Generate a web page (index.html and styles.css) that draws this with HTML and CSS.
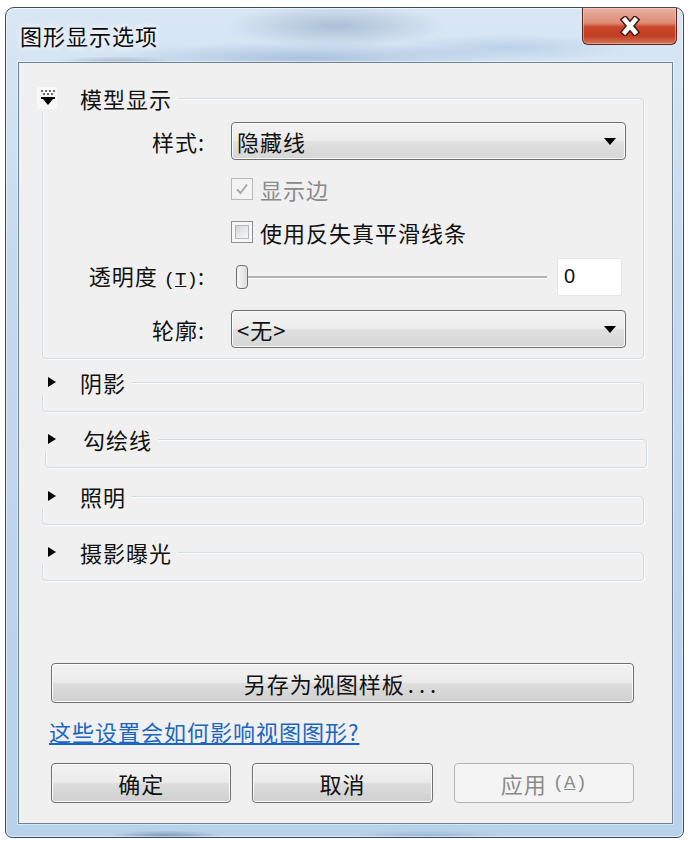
FILE: index.html
```html
<!DOCTYPE html>
<html lang="zh-CN">
<head>
<meta charset="utf-8">
<title>图形显示选项</title>
<link rel="stylesheet" href="styles.css">
</head>
<body>
<div class="window">
  <div class="titlebar">
    <div class="title">图形显示选项</div>
    <div class="close">
      <svg width="24" height="20" viewBox="0 0 24 20"><path d="M7 4 L17 16 M17 4 L7 16" stroke="#4a1810" stroke-width="7.5" stroke-linecap="square" fill="none"/><path d="M7 4 L17 16 M17 4 L7 16" stroke="#ffffff" stroke-width="4.5" stroke-linecap="square" fill="none"/></svg>
    </div>
  </div>
  <div class="client">
    <div class="group model">
      <div class="ghead">
        <span class="gicon">
          <svg width="14" height="16" viewBox="0 0 14 16">
            <g fill="#6a6a6a">
              <rect x="0" y="0" width="2" height="2"/><rect x="4" y="0" width="2" height="2"/><rect x="8" y="0" width="2" height="2"/><rect x="12" y="0" width="2" height="2"/>
              <rect x="2" y="3" width="2" height="2"/><rect x="6" y="3" width="2" height="2"/><rect x="10" y="3" width="2" height="2"/>
            </g>
            <rect x="0" y="7" width="14" height="2" fill="#000"/>
            <path d="M2 9 H12 L7 15 Z" fill="#000"/>
          </svg>
        </span>
        <span class="glabel">模型显示</span>
      </div>

      <div class="row r-style">
        <span class="lbl">样式:</span>
        <div class="ctrl">
          <div class="select"><span class="val">隐藏线</span><i class="caret"></i></div>
        </div>
      </div>

      <div class="row r-check1">
        <span class="lbl"></span>
        <div class="ctrl">
          <span class="cb cb-disabled">
            <svg width="14" height="14" viewBox="0 0 14 14"><path d="M2 7.5 L5.5 11 L12 2.5" stroke="#a9a9a9" stroke-width="2" fill="none"/></svg>
          </span>
          <span class="cbtext disabled-text">显示边</span>
        </div>
      </div>

      <div class="row r-check2">
        <span class="lbl"></span>
        <div class="ctrl">
          <span class="cb"><span class="cb-inner"></span></span>
          <span class="cbtext">使用反失真平滑线条</span>
        </div>
      </div>

      <div class="row r-slider">
        <span class="lbl">透明度 <span class="acc">(<u>T</u>)</span>:</span>
        <div class="ctrl">
          <div class="slider"><span class="track"></span><span class="thumb"></span></div>
          <div class="num">0</div>
        </div>
      </div>

      <div class="row r-outline">
        <span class="lbl">轮廓:</span>
        <div class="ctrl">
          <div class="select"><span class="val">&lt;无&gt;</span><i class="caret"></i></div>
        </div>
      </div>
    </div>

    <div class="group collapsed g1">
      <div class="ghead"><span class="garrow"><i></i></span><span class="glabel">阴影</span></div>
    </div>
    <div class="group collapsed g2">
      <div class="ghead"><span class="garrow"><i></i></span><span class="glabel">勾绘线</span></div>
    </div>
    <div class="group collapsed g3">
      <div class="ghead"><span class="garrow"><i></i></span><span class="glabel">照明</span></div>
    </div>
    <div class="group collapsed g4">
      <div class="ghead"><span class="garrow"><i></i></span><span class="glabel">摄影曝光</span></div>
    </div>

    <div class="btn save">另存为视图样板<span class="dots">...</span></div>
    <a class="link" href="#">这些设置会如何影响视图图形?</a>
    <div class="actions">
      <div class="btn">确定</div>
      <div class="btn">取消</div>
      <div class="btn btn-disabled">应用&nbsp;<span class="acc">(<u>A</u>)</span></div>
    </div>
  </div>
</div>
</body>
</html>
```

FILE: styles.css
```css
* { box-sizing: border-box; margin: 0; padding: 0; }
html, body { background: #ffffff; }
body {
  font-family: "Noto Sans CJK SC", "Noto Sans", sans-serif;
  font-size: 22px;
  letter-spacing: 1px;
  color: #111;
}

.window {
  margin: 7px 0 0 5px;
  width: 679px;
  height: 831px;
  border: 1px solid #3d4a58;
  border-radius: 9px 9px 7px 7px;
  display: flex;
  flex-direction: column;
  box-shadow: inset 0 0 0 1px rgba(255,255,255,0.55);
  background:
    radial-gradient(ellipse 70px 10px at 110px 58px, rgba(40,70,110,0.45), rgba(40,70,110,0)),
    radial-gradient(ellipse 110px 22px at 330px 18px, rgba(80,110,150,0.32), rgba(80,110,150,0)),
    radial-gradient(ellipse 200px 16px at 300px 50px, rgba(90,130,180,0.35), rgba(90,130,180,0)),
    radial-gradient(ellipse 120px 14px at 500px 40px, rgba(110,150,195,0.25), rgba(110,150,195,0)),
    radial-gradient(ellipse 60px 8px at 160px 830px, rgba(40,70,120,0.55), rgba(40,70,120,0)),
    radial-gradient(ellipse 80px 8px at 420px 830px, rgba(70,100,150,0.35), rgba(70,100,150,0)),
    linear-gradient(180deg, #d9e7f5 0%, #c6daef 30%, #bcd4ec 70%, #b9d2ec 100%);
}

.titlebar {
  height: 54px;
  flex: none;
  display: flex;
  justify-content: space-between;
  align-items: flex-start;
  padding-left: 14px;
}
.title {
  margin-top: 14px;
  line-height: 26px;
  font-size: 22px;
  color: #0a0a0a;
  text-shadow: 0 0 6px rgba(255,255,255,0.95), 0 0 10px rgba(255,255,255,0.8);
}
.close {
  width: 95px;
  height: 37px;
  margin-right: 6px;
  border: 1px solid #5e2418;
  border-top: none;
  border-radius: 0 0 6px 6px;
  background: linear-gradient(180deg, #e9b0a2 0%, #de8c76 42%, #c9482c 52%, #c23e22 78%, #d3765d 100%);
  box-shadow: inset 0 0 0 1px rgba(255,220,210,0.45);
  display: flex;
  align-items: center;
  justify-content: center;
}

.client {
  flex: 1;
  margin: 0 10px 13px 12px;
  border: 1px solid #6f8296;
  background: #f0f0f0;
  display: flex;
  flex-direction: column;
  box-shadow: 0 0 0 1px rgba(255,255,255,0.45);
}

/* group boxes */
.group {
  border: 1px solid #d3dbe2;
  border-radius: 4px;
  box-shadow: inset 1px 1px 0 #fbfbfb, 1px 1px 0 #fbfbfb;
  display: flex;
  flex-direction: column;
  margin-left: 23px;
  margin-right: 28px;
}
.ghead {
  align-self: flex-start;
  display: flex;
  align-items: center;
  height: 26px;
  margin-top: -14px;
  margin-left: -6px;
  padding-right: 6px;
  background: #f0f0f0;
}
.gicon {
  width: 20px;
  height: 22px;
  background: #f9f9f9;
  display: flex;
  align-items: center;
  justify-content: flex-end;
  padding-right: 2px;
}
.garrow {
  width: 20px;
  height: 22px;
  display: flex;
  align-items: center;
  padding-left: 11px;
}
.garrow i {
  display: block;
  width: 0; height: 0;
  border-left: 8px solid #000;
  border-top: 5px solid transparent;
  border-bottom: 5px solid transparent;
}
.glabel {
  margin-left: 23px;
  line-height: 26px;
}

.model {
  margin-top: 35px;
  padding-bottom: 10px;
}

.row {
  display: flex;
  align-items: center;
  padding-right: 17px;
}
.lbl {
  flex: none;
  width: 162px;
  text-align: right;
  line-height: 28px;
  white-space: nowrap;
}
.acc {
  font-family: "Liberation Mono", "DejaVu Sans Mono", monospace;
  font-size: 19px;
  letter-spacing: 0;
}
.ctrl {
  flex: 1;
  margin-left: 26px;
  display: flex;
  align-items: center;
}

.r-style { margin-top: 11px; }
.r-check1 { margin-top: 18px; height: 22px; }
.r-check2 { margin-top: 21px; height: 22px; }
.r-slider { margin-top: 15px; }
.r-outline { margin-top: 14px; }

.select {
  flex: 1;
  height: 38px;
  border: 1px solid #707070;
  border-radius: 4px;
  background: linear-gradient(180deg, #f3f3f3 0%, #ececec 48%, #e0e0e0 52%, #d6d6d6 100%);
  box-shadow: inset 0 0 0 1px #fbfbfb;
  display: flex;
  align-items: center;
  justify-content: space-between;
  padding: 0 9px 0 5px;
}
.val { line-height: 28px; }
.caret {
  display: block;
  width: 0; height: 0;
  border-left: 6px solid transparent;
  border-right: 6px solid transparent;
  border-top: 7px solid #000;
}

.cb {
  width: 22px;
  height: 22px;
  border: 1px solid #8e8f8f;
  background: #f6f6f6;
  display: flex;
  align-items: center;
  justify-content: center;
  flex: none;
}
.cb-inner {
  width: 14px;
  height: 14px;
  border: 1px solid #b3b8bd;
  background: linear-gradient(135deg, #d2d4d6 0%, #e8e9ea 55%, #f7f7f7 100%);
}
.cb-disabled {
  border-color: #b9b9b9;
  background: #f4f4f4;
}
.cbtext {
  margin-left: 7px;
  line-height: 28px;
}
.disabled-text { color: #8a8a8a; }

.slider {
  flex: 1;
  height: 26px;
  position: relative;
  display: flex;
  align-items: center;
}
.track {
  display: block;
  margin-left: 9px;
  flex: 1;
  height: 3px;
  border-top: 2px solid #b4b4b4;
  border-bottom: 1px solid #ffffff;
}
.thumb {
  position: absolute;
  left: 5px;
  top: 1px;
  width: 12px;
  height: 24px;
  border: 1px solid #6f6f6f;
  border-radius: 4px;
  background: linear-gradient(90deg, #f7f7f7, #dcdcdc);
}
.num {
  flex: none;
  width: 65px;
  height: 38px;
  margin-left: 10px;
  margin-right: 4px;
  background: #ffffff;
  border: 1px solid #e1e6eb;
  border-radius: 2px;
  font-family: "Liberation Sans", Arial, sans-serif;
  font-size: 20px;
  letter-spacing: 0;
  line-height: 34px;
  padding-left: 6px;
}

.collapsed { height: 30px; }
.g1 { margin-top: 23px; }
.g2 { margin-top: 27px; height: 29px; margin-left: 26px; margin-right: 25px; }
.g2 .ghead { margin-left: -9px; }
.g2 .glabel { margin-left: 26px; }
.g3 { margin-top: 28px; height: 29px; }
.g4 { margin-top: 27px; height: 29px; }

.btn {
  height: 40px;
  border: 1px solid #707070;
  border-radius: 4px;
  background: linear-gradient(180deg, #f3f3f3 0%, #ebebeb 48%, #dddddd 52%, #cfcfcf 100%);
  box-shadow: inset 0 0 0 1px #fcfcfc;
  display: flex;
  align-items: center;
  justify-content: center;
  line-height: 28px;
  white-space: nowrap;
}
.dots {
  letter-spacing: 5px;
  margin-left: 3px;
}
.save {
  margin: auto 38px 0 32px;
}
.link {
  margin: 14px 0 0 30px;
  align-self: flex-start;
  color: #1a66c2;
  text-decoration: underline;
  line-height: 28px;
}
.actions {
  margin: 18px 38px 20px 32px;
  display: flex;
  gap: 21px;
}
.actions .btn { flex: 1; }
.btn-disabled {
  border-color: #b0b4b7;
  background: #f4f4f4;
  box-shadow: none;
  color: #8a8a8a;
}
```
